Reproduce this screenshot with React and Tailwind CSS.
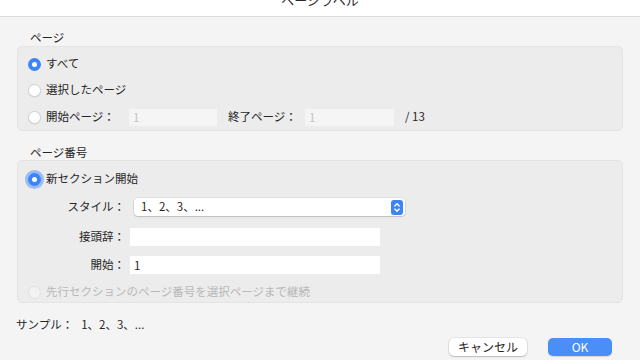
import React from "react";

const font = { fontFamily: '"Noto Sans CJK JP", "Noto Sans", sans-serif' };

function Radio({ checked, focus, disabled }) {
  if (checked) {
    return (
      <div className={`w-[13px] h-[13px] rounded-full bg-[#3d84f6] flex items-center justify-center shrink-0 ${focus ? "ring-[3px] ring-[#9bbdf3]" : ""}`}>
        <div className="w-[5px] h-[5px] rounded-full bg-white" />
      </div>
    );
  }
  return (
    <div className={`w-[13px] h-[13px] rounded-full shrink-0 border ${disabled ? "bg-[#f2f2f2] border-[#e0e0e0]" : "bg-white border-[#d2d2d2] shadow-[0_0.5px_1px_rgba(0,0,0,0.12)]"}`} />
  );
}

export default function App() {
  return (
    <div style={font} className="w-[640px] h-[360px] bg-[#f4f4f4] text-[#262626] text-[11.5px] overflow-hidden flex flex-col">
      {/* title bar */}
      <div className="h-[17px] bg-white border-b border-[#dcdcdc] overflow-hidden flex justify-center shrink-0">
        <div className="text-[13px] leading-[16px] mt-[-8px] text-[#2b2b2b]">ページラベル</div>
      </div>

      {/* ページ */}
      <div className="pl-[30px] mt-[13px] h-[14px] leading-[14px]">ページ</div>
      <div className="mx-[17px] mt-[2px] h-[85px] rounded-[5px] bg-[#ececec] border border-[#e4e4e4] pl-[10px] pt-[7px] flex flex-col">
        <div className="h-[20px] flex items-center gap-[5px]">
          <Radio checked />
          <span>すべて</span>
        </div>
        <div className="h-[20px] mt-[6px] flex items-center gap-[5px]">
          <Radio />
          <span>選択したページ</span>
        </div>
        <div className="h-[20px] mt-[7px] flex items-center">
          <Radio />
          <span className="ml-[5px] w-[69px]">開始ページ：</span>
          <div className="ml-[14px] w-[88px] h-[17px] bg-[#f5f5f5] text-[#c4c4c4] pl-[4px] leading-[17px]">1</div>
          <span className="ml-[11px] w-[69px]">終了ページ：</span>
          <div className="ml-[8px] w-[89px] h-[17px] bg-[#f5f5f5] text-[#c4c4c4] pl-[4px] leading-[17px]">1</div>
          <span className="ml-[11px]">/ 13</span>
        </div>
      </div>

      {/* ページ番号 */}
      <div className="pl-[30px] mt-[14px] h-[14px] leading-[14px]">ページ番号</div>
      <div className="mx-[17px] mt-[1px] h-[143px] rounded-[5px] bg-[#ececec] border border-[#e4e4e4] pl-[10px] pt-[8px] flex flex-col">
        <div className="h-[20px] flex items-center gap-[5px]">
          <Radio checked focus />
          <span>新セクション開始</span>
        </div>
        <div className="h-[20px] mt-[8px] flex items-center">
          <span className="w-[97px] text-right">スタイル：</span>
          <div className="ml-[9px] w-[271px] h-[18px] bg-white rounded-[4px] shadow-[0_0_0_0.5px_rgba(0,0,0,0.12),0_1px_1.5px_rgba(0,0,0,0.15)] flex items-center justify-between pl-[7px] pr-[2px]">
            <span>1、2、3、...</span>
            <div className="w-[12px] h-[15px] rounded-[3px] bg-[#3d84f6] flex items-center justify-center">
              <svg width="8" height="11" viewBox="0 0 8 11" fill="none" stroke="white" strokeWidth="1.3" strokeLinecap="round" strokeLinejoin="round">
                <path d="M1.8 4 L4 1.8 L6.2 4" />
                <path d="M1.8 7 L4 9.2 L6.2 7" />
              </svg>
            </div>
          </div>
        </div>
        <div className="h-[20px] mt-[10px] flex items-center">
          <span className="w-[97px] text-right">接頭辞：</span>
          <div className="ml-[5px] w-[250px] h-[18px] bg-white" />
        </div>
        <div className="h-[20px] mt-[8px] flex items-center">
          <span className="w-[97px] text-right">開始：</span>
          <div className="ml-[5px] w-[250px] h-[18px] bg-white pl-[4px] leading-[18px]">1</div>
        </div>
        <div className="h-[18px] mt-[8px] flex items-center gap-[5px]">
          <Radio disabled />
          <span className="text-[#b8b8b8]">先行セクションのページ番号を選択ページまで継続</span>
        </div>
      </div>

      {/* sample */}
      <div className="pl-[16px] mt-[14px] h-[16px] flex items-center">
        <span>サンプル：</span>
        <span className="ml-[8px]">1、2、3、...</span>
      </div>

      {/* buttons */}
      <div className="mt-[5px] flex justify-end pr-[28px] gap-[21px]">
        <div className="w-[78px] h-[18px] rounded-[5px] bg-white shadow-[0_0_0_0.5px_rgba(0,0,0,0.12),0_1px_1.5px_rgba(0,0,0,0.18)] flex items-center justify-center text-[12px]">キャンセル</div>
        <div className="w-[64px] h-[18px] rounded-[5px] bg-[#4a8ff8] shadow-[0_1px_1px_rgba(0,0,0,0.12)] flex items-center justify-center text-white text-[12px]">OK</div>
      </div>
    </div>
  );
}
